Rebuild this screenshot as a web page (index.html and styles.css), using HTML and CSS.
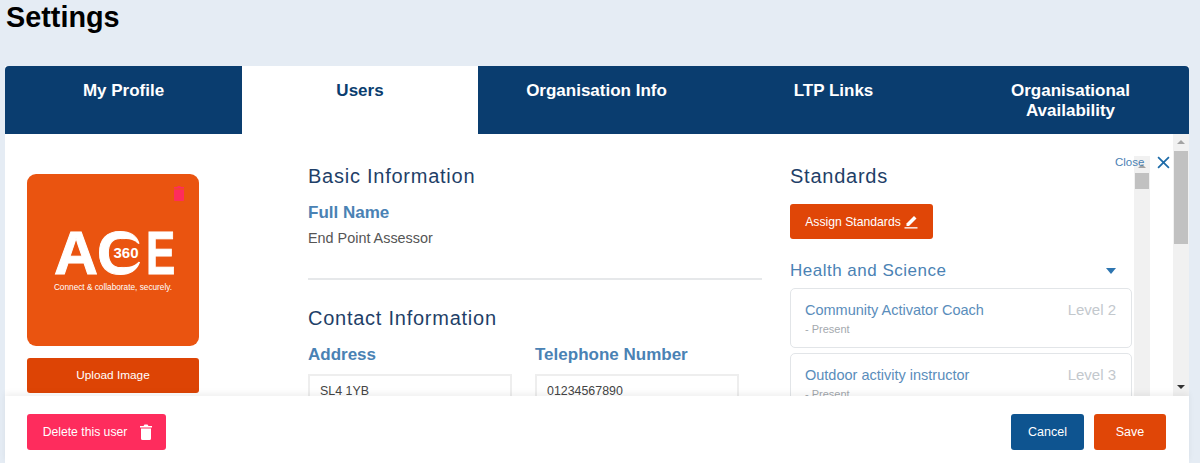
FILE: index.html
```html
<!DOCTYPE html>
<html lang="en">
<head>
  <meta charset="UTF-8" />
  <title>Settings</title>
  <link rel="stylesheet" href="styles.css">
</head>
<body>
  <h1 class="page-title">Settings</h1>
  <div class="panel">
    <div class="tabs">
      <div class="tab">My Profile</div>
      <div class="tab active">Users</div>
      <div class="tab">Organisation Info</div>
      <div class="tab">LTP Links</div>
      <div class="tab">Organisational Availability</div>
    </div>
    <div class="modal-body">
      <div class="col-image">
        <div class="logo">
          <svg class="logo-bin" viewBox="0 0 12 16"><path d="M1 2h3l1-1h2l1 1h3v1.500H1zM1 4.500h10V15a1 1 0 0 1-1 1H2a1 1 0 0 1-1-1z"/></svg>
          <div class="logo-mark">AC<span class="logo-e">E</span></div>
          <div class="logo-360">360</div>
          <div class="logo-tag">Connect &amp; collaborate, securely.</div>
        </div>
        <div class="btn btn-upload">Upload Image</div>
      </div>
      <div class="col-info">
        <h2 class="section-title">Basic Information</h2>
        <div class="field-label">Full Name</div>
        <div class="field-value">End Point Assessor</div>
        <div class="divider"></div>
        <h2 class="section-title">Contact Information</h2>
        <div class="contact-row">
          <div class="contact-field">
            <div class="field-label">Address</div>
            <div class="input">SL4 1YB</div>
          </div>
          <div class="contact-field">
            <div class="field-label">Telephone Number</div>
            <div class="input">01234567890</div>
          </div>
        </div>
      </div>
      <div class="col-standards">
        <h2 class="section-title">Standards</h2>
        <div class="btn btn-assign">Assign Standards
          <svg class="pencil" viewBox="0 0 14 14"><path d="M10 1l2.500 2.500-7.500 7.500H2.500V8.500z"/><rect x="0.500" y="12.200" width="13" height="1.300"/></svg>
        </div>
        <div class="sector">
          <span>Health and Science</span>
          <span class="caret"></span>
        </div>
        <div class="standard">
          <div class="standard-top"><span>Community Activator Coach</span><span class="level">Level 2</span></div>
          <div class="present">- Present</div>
        </div>
        <div class="standard">
          <div class="standard-top"><span>Outdoor activity instructor</span><span class="level">Level 3</span></div>
          <div class="present">- Present</div>
        </div>
      </div>
      <div class="inner-scroll"><div class="arrow-up"></div><div class="inner-thumb"></div></div>
      <div class="close-spacer"></div>
      <div class="outer-scroll">
        <div class="arrow-up"></div>
        <div class="outer-thumb"></div>
        <div class="arrow-down"></div>
      </div>
      <div class="close-link">Close</div>
      <svg class="close-x" viewBox="0 0 12 12"><path d="M1 1l10 10M11 1L1 11"/></svg>
    </div>
    <div class="modal-footer">
      <div class="btn btn-delete">Delete this user
        <svg class="bin" viewBox="0 0 12 16"><path d="M0 2h3.500l1-1.500h3l1 1.500H12v1.500H0zM1 4.500h10V14.500A1.500 1.500 0 0 1 9.500 16h-7A1.500 1.500 0 0 1 1 14.500z"/></svg>
      </div>
      <div class="footer-right">
        <div class="btn btn-cancel">Cancel</div>
        <div class="btn btn-save">Save</div>
      </div>
    </div>
  </div>
</body>
</html>
```

FILE: styles.css
```css
* {
  box-sizing: border-box;
}
html, body {
  height: 463px;
  overflow: hidden;
}
body {
  margin: 0;
  background-color: #e5ecf4;
  font-family: "Liberation Sans", Arial, sans-serif;
  padding: 0 11px 0 5px;
}
.page-title {
  margin: 0;
  height: 66px;
  padding: 1px 0 0 1px;
  font-size: 28.800px;
  line-height: 32px;
  font-weight: bold;
  color: #000;
}
.panel {
  display: flex;
  flex-direction: column;
  height: 397px;
  background: #fff;
}
.tabs {
  display: grid;
  grid-template-columns: 237px 236px 1fr 1fr 1fr;
  height: 68px;
  background: #0a3d6f;
  border-radius: 4px 4px 0 0;
  overflow: hidden;
}
.tab {
  padding: 15px 20px 0;
  color: #fff;
  font-size: 17px;
  font-weight: bold;
  line-height: 20px;
  text-align: center;
}
.tab.active {
  background: #fff;
  color: #0a3d6f;
}
.modal-body {
  position: relative;
  display: flex;
  height: 262px;
  overflow: hidden;
}
.col-image {
  width: 303px;
  padding: 40px 0 0 22px;
  flex-shrink: 0;
}
.logo {
  position: relative;
  width: 172px;
  height: 172px;
  margin-bottom: 12px;
  padding-top: 50px;
  background: #ea5410;
  border-radius: 9px;
  color: #fff;
}
.logo-bin {
  position: absolute;
  top: 11px;
  right: 14px;
  width: 12px;
  height: 16px;
  fill: #fe2c5d;
}
.logo-mark {
  padding-left: 27px;
  font-size: 61px;
  line-height: 58px;
  font-weight: bold;
  letter-spacing: -1px;
  white-space: nowrap;
  -webkit-text-stroke: 1px #fff;
}
.logo-e {
  display: inline-block;
  margin-left: 6px;
  transform: scaleX(0.72);
  transform-origin: left center;
}
.logo-360 {
  position: absolute;
  top: 65px;
  left: 83px;
  width: 32px;
  height: 28px;
  background: #ea5410;
  border-radius: 50%;
  font-size: 15px;
  font-weight: bold;
  line-height: 28px;
  text-align: center;
}
.logo-tag {
  margin-top: 1px;
  font-size: 8.250px;
  line-height: 10px;
  text-align: center;
  white-space: nowrap;
}
.btn {
  display: flex;
  align-items: center;
  justify-content: center;
  height: 35px;
  border-radius: 3px;
  color: #fff;
  font-size: 12.500px;
}
.btn-upload {
  width: 172px;
  padding-bottom: 2px;
  background: #dd4405;
  font-size: 11.800px;
}
.col-info {
  width: 454px;
  flex-shrink: 0;
  padding-top: 29px;
}
.section-title {
  margin: 0;
  font-size: 20px;
  line-height: 26px;
  font-weight: normal;
  letter-spacing: 0.750px;
  color: #1f3f68;
}
.field-label {
  margin-top: 14px;
  font-size: 17px;
  line-height: 20px;
  font-weight: bold;
  color: #4a82b4;
}
.field-value {
  margin-top: 6px;
  font-size: 14.400px;
  line-height: 18px;
  color: #555;
}
.divider {
  height: 2px;
  margin: 31px 0 25px;
  background: #e6e8ea;
}
.contact-row {
  display: flex;
  gap: 23px;
}
.contact-field {
  width: 204px;
}
.contact-field .field-label {
  margin-top: 14px;
  margin-bottom: 9px;
}
.input {
  height: 36px;
  padding: 7px 10px;
  border: 2px solid #eee;
  font-size: 12.400px;
  line-height: 16px;
  color: #444;
}
.col-standards {
  width: 342px;
  margin-left: 28px;
  flex-shrink: 0;
  padding-top: 29px;
}
.btn-assign {
  width: 143px;
  margin-top: 15px;
  gap: 3px;
  background: #e04607;
  font-size: 12.200px;
}
.pencil {
  width: 14px;
  height: 14px;
  fill: #fff;
}
.sector {
  display: flex;
  align-items: center;
  justify-content: space-between;
  margin-top: 22px;
  padding-right: 16px;
  font-size: 17px;
  line-height: 20px;
  letter-spacing: 0.500px;
  color: #4a82b4;
}
.caret {
  width: 0;
  height: 0;
  border-left: 5px solid transparent;
  border-right: 5px solid transparent;
  border-top: 6px solid #2d75b0;
}
.standard {
  height: 60px;
  margin-top: 7px;
  padding: 12px 15px 0 14px;
  border: 1px solid #e2e5e8;
  border-radius: 5px;
}
.standard + .standard {
  margin-top: 5px;
}
.standard-top {
  display: flex;
  justify-content: space-between;
  font-size: 14.500px;
  line-height: 18px;
  color: #5a8dbb;
}
.level {
  font-size: 15px;
  color: #c3c8cd;
}
.present {
  margin-top: 3px;
  font-size: 11px;
  line-height: 14px;
  color: #a4a9ae;
}
.inner-scroll {
  width: 16px;
  height: 240px;
  margin: 22px 0 0 2px;
  flex-shrink: 0;
  background: #f1f1f1;
  padding: 17px 1px 0;
  position: relative;
}
.inner-thumb {
  height: 16px;
  background: #c1c1c1;
}
.inner-scroll .arrow-up {
  position: absolute;
  top: 8px;
  left: 4px;
}
.close-spacer {
  flex: 1;
}
.outer-scroll {
  display: flex;
  flex-direction: column;
  align-items: center;
  width: 16px;
  flex-shrink: 0;
  padding-top: 6px;
  background: #f1f1f1;
}
.arrow-up {
  width: 0;
  height: 0;
  border-left: 4px solid transparent;
  border-right: 4px solid transparent;
  border-bottom: 4px solid #a3a3a3;
}
.arrow-down {
  width: 0;
  height: 0;
  margin-top: 141px;
  border-left: 4px solid transparent;
  border-right: 4px solid transparent;
  border-top: 4px solid #333;
}
.outer-thumb {
  width: 14px;
  height: 93px;
  margin-top: 7px;
  background: #c1c1c1;
}
.close-link {
  position: absolute;
  top: 21px;
  left: 1110px;
  font-size: 11.500px;
  line-height: 14px;
  color: #4a82b4;
}
.close-x {
  position: absolute;
  top: 22px;
  left: 1152px;
  width: 13px;
  height: 13px;
  fill: none;
  stroke: #1d6ba8;
  stroke-width: 1.600;
}
.modal-footer {
  position: relative;
  display: flex;
  justify-content: space-between;
  flex: 1;
  padding: 18px 23px 0 22px;
  background: #fff;
  box-shadow: 0 -3px 6px rgba(0, 0, 0, 0.06);
}
.btn-delete {
  width: 139px;
  height: 36px;
  gap: 13px;
  padding-left: 2px;
  background: #fe2c5d;
  font-size: 12.200px;
}
.bin {
  width: 12px;
  height: 16px;
  fill: #fff;
}
.footer-right {
  display: flex;
  gap: 10px;
}
.btn-cancel {
  width: 73px;
  height: 36px;
  background: #0e5490;
}
.btn-save {
  width: 72px;
  height: 36px;
  background: #e04607;
}
```
